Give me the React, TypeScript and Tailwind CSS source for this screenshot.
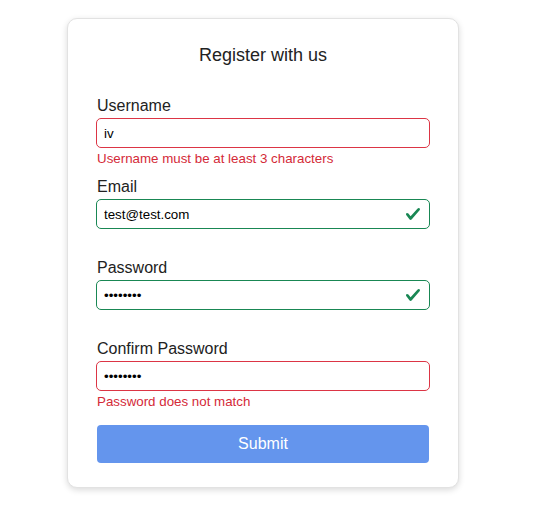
import React from "react";

function Check() {
  return (
    <svg width="16" height="16" viewBox="0 0 8 8" className="absolute right-[9px] top-1/2 -translate-y-1/2">
      <path fill="#198754" d="M2.3 6.73.6 4.53c-.4-1.04.46-1.4 1.1-.8l1.1 1.4 3.4-3.8c.6-.63 1.6-.27 1.2.7l-4 4.6c-.43.5-.8.4-1.1.1z" />
    </svg>
  );
}

type FieldProps = {
  label: string;
  value: string;
  type?: string;
  state: "valid" | "invalid";
  error?: string;
};

function Field({ label, value, type = "text", state, error }: FieldProps) {
  const valid = state === "valid";
  return (
    <div className="h-[81px]">
      <label className="block pl-[1px] text-[16px] leading-[24px] text-[#222]">{label}</label>
      <div className="relative">
        {valid ? (
          <input
            type={type}
            value={value}
            readOnly
            className="block w-full h-[30px] rounded-[5px] border border-[#198754] px-[7px] text-[13.33px] text-black outline-none font-['Liberation_Sans',Arial,sans-serif]"
          />
        ) : (
          <input
            type={type}
            value={value}
            readOnly
            className="block w-full h-[30px] rounded-[5px] border border-[#dc3545] px-[7px] text-[13.33px] text-black outline-none font-['Liberation_Sans',Arial,sans-serif]"
          />
        )}
        {valid && <Check />}
      </div>
      {error && <div className="pt-[1px] pl-[1px] text-[13.33px] leading-[20px] text-[#d42a38]">{error}</div>}
    </div>
  );
}

export default function App() {
  return (
    <div className="min-h-[514px] bg-white pt-[18px] pl-[67px] font-['Liberation_Sans',Arial,sans-serif]">
      <div className="w-[392px] h-[470px] rounded-[10px] border border-[#e2e2e2] bg-white shadow-[0_2px_6px_rgba(0,0,0,0.15)] px-[28px] pt-[23px]">
        <h1 className="text-center text-[18px] leading-[27px] text-[#222]">Register with us</h1>
        <div className="mt-[25px]">
          <Field label="Username" value="iv" state="invalid" error="Username must be at least 3 characters" />
          <Field label="Email" value="test@test.com" state="valid" />
          <Field label="Password" value="12345678" type="password" state="valid" />
          <Field label="Confirm Password" value="12345678" type="password" state="invalid" error="Password does not match" />
        </div>
        <div className="px-[1px]">
          <button className="mt-[7px] block w-full h-[38px] rounded-[4px] bg-[#6495ed] text-white text-[16px]">Submit</button>
        </div>
      </div>
    </div>
  );
}
